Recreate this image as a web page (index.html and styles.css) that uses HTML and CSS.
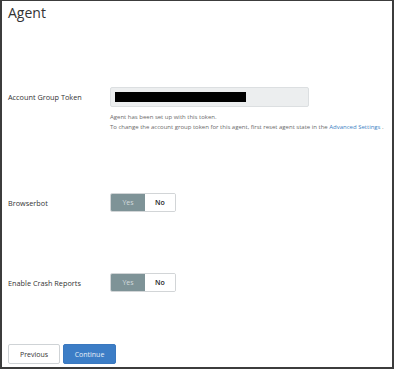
FILE: index.html
```html
<!DOCTYPE html>
<html>
<head>
<meta charset="utf-8">
<link rel="stylesheet" href="styles.css">
</head>
<body>
<div class="frame">
  <h1 class="title">Agent</h1>
  <div class="row row-token">
    <div class="label">Account Group Token</div>
    <div class="token-input"><span class="redact"></span></div>
  </div>
  <div class="help">
    <div class="help-line">Agent has been set up with this token.</div>
    <div class="help-line">To change the account group token for this agent, first reset agent state in the <a class="link">Advanced Settings</a> .</div>
  </div>
  <div class="row row-browserbot">
    <div class="label">Browserbot</div>
    <div class="toggle"><span class="seg seg-on">Yes</span><span class="seg seg-off">No</span></div>
  </div>
  <div class="row row-crash">
    <div class="label">Enable Crash Reports</div>
    <div class="toggle"><span class="seg seg-on">Yes</span><span class="seg seg-off">No</span></div>
  </div>
  <div class="actions">
    <button class="btn btn-prev">Previous</button>
    <button class="btn btn-next">Continue</button>
  </div>
</div>
</body>
</html>
```
FILE: styles.css
```css
html, body {
  margin: 0;
  padding: 0;
  background: #ffffff;
}
.frame {
  box-sizing: border-box;
  width: 394px;
  height: 369px;
  border-top: 1px solid #3c3c3c;
  border-left: 2px solid #3c3c3c;
  border-right: 2px solid #3c3c3c;
  border-bottom: 2px solid #3c3c3c;
  padding: 0 0 0 6px;
  font-family: "Open Sans", "Noto Sans", sans-serif;
  color: #333;
}
.title {
  margin: 0;
  padding-top: 2px;
  font-size: 14px;
  line-height: 20px;
  font-weight: 400;
  color: #333;
}
.row {
  display: grid;
  grid-template-columns: 102px auto;
  align-items: center;
}
.label {
  font-size: 7.3px;
  color: #333;
}
.row-token {
  margin-top: 64px;
}
.token-input {
  box-sizing: border-box;
  width: 199px;
  height: 20px;
  background: #eceeef;
  border: 1px solid #dcdfe1;
  border-radius: 2px;
  display: flex;
  align-items: center;
  padding-left: 4px;
}
.redact {
  display: block;
  width: 131px;
  height: 10px;
  background: #000;
}
.help {
  margin: 5px 0 0 102px;
  font-size: 6px;
  line-height: 10px;
  color: #6a6a6a;
}
.link {
  color: #3d7fc4;
}
.row-browserbot {
  margin-top: 61px;
}
.row-crash {
  margin-top: 61px;
}
.toggle {
  display: flex;
  width: 66px;
  height: 19px;
  box-sizing: border-box;
  border: 1px solid #d2d5d7;
  border-radius: 2px;
  overflow: hidden;
}
.seg {
  display: flex;
  align-items: center;
  justify-content: center;
  font-size: 7px;
}
.seg-on {
  width: 34px;
  background: #7e9397;
  color: #d4dcde;
}
.seg-off {
  flex: 1;
  background: #fff;
  color: #222;
  font-weight: 600;
}
.actions {
  margin-top: 52px;
  display: flex;
  gap: 3px;
}
.btn {
  box-sizing: border-box;
  height: 20px;
  border-radius: 2px;
  font-family: "Open Sans", "Noto Sans", sans-serif;
  font-size: 7px;
  padding: 0;
  cursor: pointer;
}
.btn-prev {
  width: 52px;
  background: #fff;
  border: 1px solid #cfd3d6;
  color: #333;
}
.btn-next {
  width: 53px;
  background: #3c7dc6;
  border: 1px solid #3a78bf;
  color: #e6eef8;
}
```
